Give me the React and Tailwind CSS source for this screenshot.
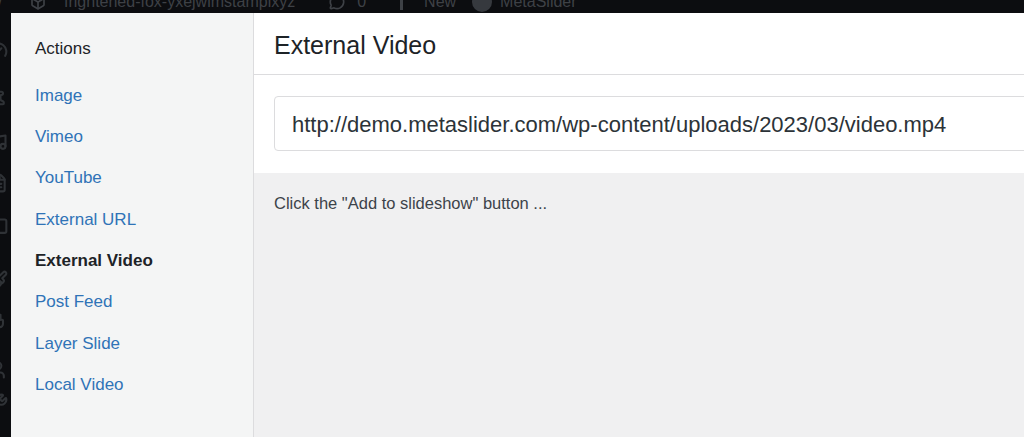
import { Gauge, Pin, Music, FileText, MessageSquare, Paintbrush, Plug, User, Wrench, Package, MessageCircle } from 'lucide-react';

const menuIcons = [
  { Icon: Gauge, cls: 'mt-[27px]' },
  { Icon: Pin, cls: 'mt-[30px]' },
  { Icon: Music, cls: 'mt-[23px]' },
  { Icon: FileText, cls: 'mt-[20px]' },
  { Icon: MessageSquare, cls: 'mt-[24px]' },
  { Icon: Paintbrush, cls: 'mt-[33px]' },
  { Icon: Plug, cls: 'mt-[23px]' },
  { Icon: User, cls: 'mt-[27px]' },
  { Icon: Wrench, cls: 'mt-[13px]' },
];

const actions = ['Image', 'Vimeo', 'YouTube', 'External URL', 'External Video', 'Post Feed', 'Layer Slide', 'Local Video'];

function AdminBar() {
  // only the lower part of the WP admin bar shows above the modal
  return (
    <div className="h-[13px] shrink-0 overflow-hidden bg-[#0c0d10] text-[#3e4146]">
      <div className="flex items-center h-[16px] mt-[-6px] text-[16px] leading-[16px] whitespace-nowrap">
        <span className="ml-[-2px] w-[8px] text-[15px]">/</span>
        <Package className="ml-[24px] w-[16px] h-[16px]" strokeWidth={2.5} />
        <span className="ml-[18px]">frightened-fox-yxejwlmstampixyz</span>
        <MessageCircle className="ml-[34px] w-[16px] h-[16px]" strokeWidth={2.5} />
        <span className="ml-[12px]">0</span>
        <span className="ml-[34px] w-[6px] h-[16px] border-l-[3px] border-[#3e4146]" />
        <span className="ml-[18px]">New</span>
        <span className="ml-[16px] w-[20px] h-[20px] rounded-full bg-[#36393e]" />
        <span className="ml-[8px]">MetaSlider</span>
      </div>
    </div>
  );
}

export default function App() {
  return (
    <div className="w-[1024px] h-[437px] overflow-hidden bg-[#0c0d10] flex flex-col font-['Liberation_Sans',Arial,sans-serif]">
      <AdminBar />

      <div className="flex flex-1 min-h-0">
        {/* WP admin menu, dimmed and cut off */}
        <div className="w-[11px] shrink-0 overflow-hidden flex flex-col text-[#2f3236]">
          {menuIcons.map(({ Icon, cls }, i) => (
            <Icon key={i} className={`${cls} ml-[-12px] w-[20px] h-[20px] shrink-0`} strokeWidth={2.5} />
          ))}
        </div>

        {/* Actions sidebar */}
        <div className="w-[243px] shrink-0 bg-[#f4f5f5] border-r border-[#dcdcde] pl-6">
          <div className="pt-[24px] h-[48px] text-[17px] leading-[24px] text-[#1d2327]">Actions</div>
          <ul className="mt-[14px]">
            {actions.map((a) => (
              <li
                key={a}
                className={`h-[41.3px] flex items-center text-[17px] ${
                  a === 'External Video' ? 'font-bold text-[#1d2327]' : 'text-[#2f73b7]'
                }`}
              >
                {a}
              </li>
            ))}
          </ul>
        </div>

        {/* Main panel */}
        <div className="flex-1 min-w-0 flex flex-col bg-white overflow-hidden">
          <div className="h-[62px] shrink-0 border-b border-[#dcdcde] px-5 flex items-center pt-[4px]">
            <h1 className="text-[25px] text-[#1d2327] font-normal">External Video</h1>
          </div>
          <div className="h-[98px] shrink-0 pl-5 pt-[21px]">
            <div className="w-[800px] h-[55px] border border-[#dcdcde] rounded-[4px] flex items-center pl-[17px] pt-[1px] text-[22px] text-[#2c3338] whitespace-nowrap">
              http://demo.metaslider.com/wp-content/uploads/2023/03/video.mp4
            </div>
          </div>
          <div className="flex-1 bg-[#f0f0f1] px-5 pt-[20px]">
            <p className="text-[16.5px] leading-[20px] text-[#3c434a]">Click the "Add to slideshow" button ...</p>
          </div>
        </div>
      </div>
    </div>
  );
}
